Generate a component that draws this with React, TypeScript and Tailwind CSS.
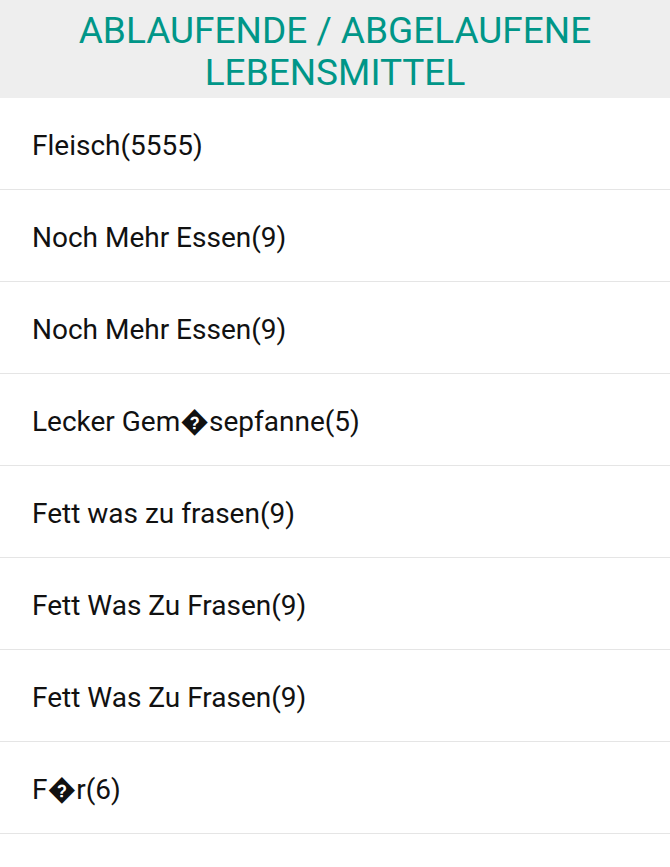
const items = [
  "Fleisch(5555)",
  "Noch Mehr Essen(9)",
  "Noch Mehr Essen(9)",
  "Lecker Gem\uFFFDsepfanne(5)",
  "Fett was zu frasen(9)",
  "Fett Was Zu Frasen(9)",
  "Fett Was Zu Frasen(9)",
  "F\uFFFDr(6)",
]

const App = () => {
  return (
    <div className="min-h-screen bg-white font-['Roboto','DejaVu_Sans',sans-serif]">
      <div className="flex h-[98px] items-center justify-center bg-[#eeeeee] px-6 pt-[6px]">
        <h1 className="text-center text-[37px] leading-[42px] text-[#009688]">
          ABLAUFENDE / ABGELAUFENE LEBENSMITTEL
        </h1>
      </div>
      <ul>
        {items.map((item, i) => (
          <li
            key={i}
            className="flex h-[92px] items-center border-b border-[#e5e5e5] pl-8 pt-[4px] text-[28px] text-[#111111]"
          >
            {item}
          </li>
        ))}
        <li className="h-[92px]" />
      </ul>
    </div>
  )
}

export default App
